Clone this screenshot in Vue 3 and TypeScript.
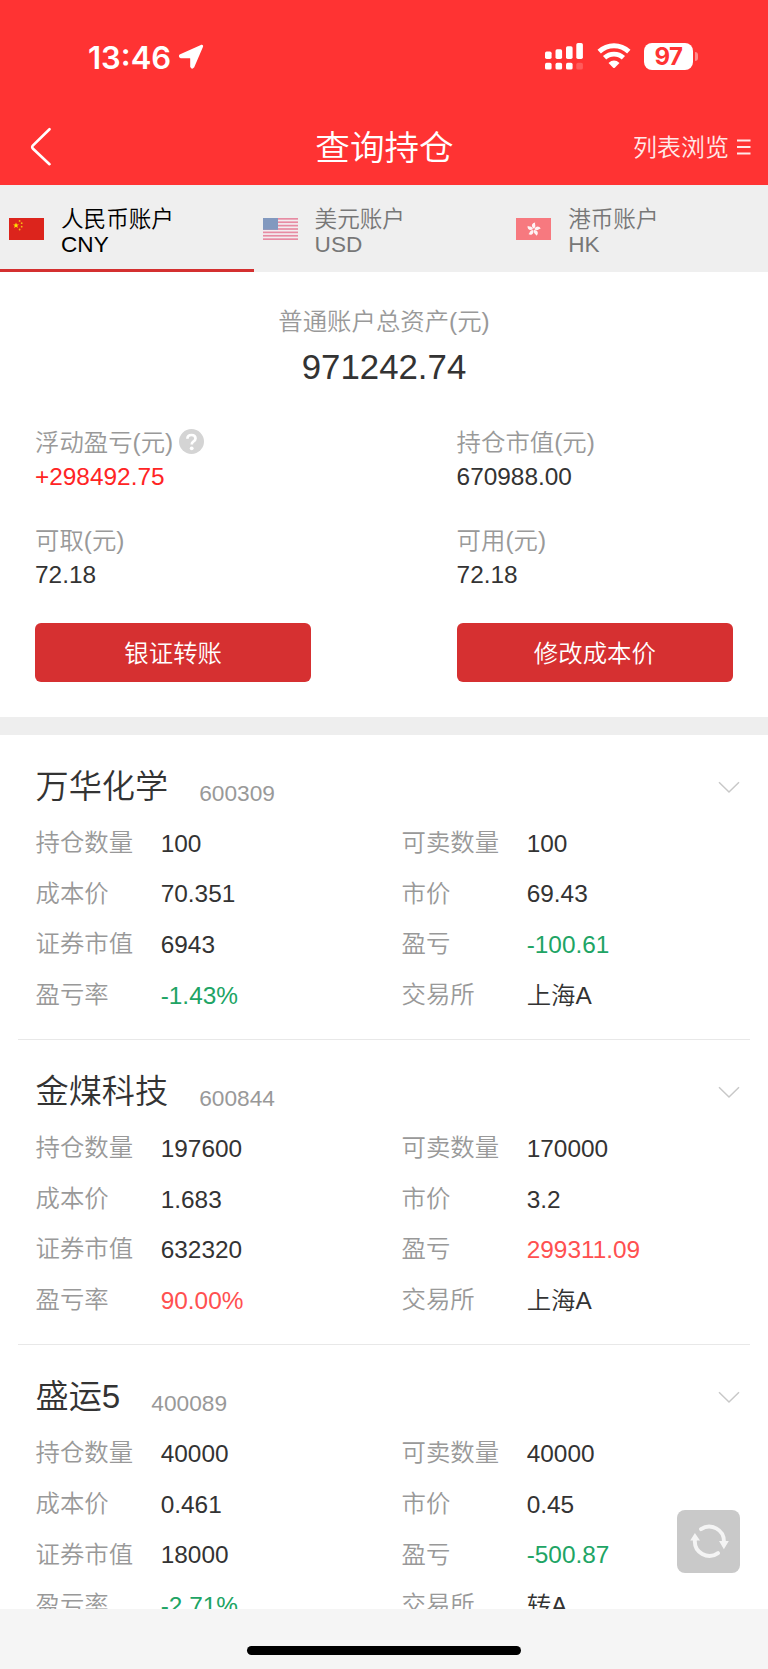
<script setup lang="ts">
type Tone = 'plain' | 'up' | 'down'
interface Cell { label: string; value: string; tone?: Tone }
interface Holding { name: string; code: string; cells: Cell[] }

const tabs = [
  { flag: 'cn', name: '人民币账户', code: 'CNY', active: true },
  { flag: 'us', name: '美元账户', code: 'USD', active: false },
  { flag: 'hk', name: '港币账户', code: 'HK', active: false },
]

const summary: { label: string; value: string; up?: boolean; help?: boolean }[] = [
  { label: '浮动盈亏(元)', value: '+298492.75', up: true, help: true },
  { label: '持仓市值(元)', value: '670988.00' },
  { label: '可取(元)', value: '72.18' },
  { label: '可用(元)', value: '72.18' },
]

function cells(v: string[], tone: Tone): Cell[] {
  return [
    { label: '持仓数量', value: v[0] },
    { label: '可卖数量', value: v[1] },
    { label: '成本价', value: v[2] },
    { label: '市价', value: v[3] },
    { label: '证券市值', value: v[4] },
    { label: '盈亏', value: v[5], tone },
    { label: '盈亏率', value: v[6], tone },
    { label: '交易所', value: v[7] },
  ]
}

const holdings: Holding[] = [
  { name: '万华化学', code: '600309', cells: cells(['100', '100', '70.351', '69.43', '6943', '-100.61', '-1.43%', '上海A'], 'down') },
  { name: '金煤科技', code: '600844', cells: cells(['197600', '170000', '1.683', '3.2', '632320', '299311.09', '90.00%', '上海A'], 'up') },
  { name: '盛运5', code: '400089', cells: cells(['40000', '40000', '0.461', '0.45', '18000', '-500.87', '-2.71%', '转A'], 'down') },
]
</script>

<template>
  <div class="screen">
    <header class="top">
      <div class="status">
        <span class="time">13:46</span>
        <svg class="arrow" width="26" height="26" viewBox="0 0 26 26"><path d="M23.300 1.800Q24.500 1.400 24 2.700L15.200 23Q14 24.500 13.200 22.700V14.500Q13.100 13.400 12 13.300H3Q1 12.600 2.600 11.100Z" fill="#fff" stroke="#fff" stroke-width="2" stroke-linejoin="round" /></svg>
        <div class="signals">
          <svg width="39" height="27" viewBox="0 0 39 27" fill="#fff">
            <rect x="0" y="8.500" width="6.600" height="7.500" rx="1.700" /><rect x="10.500" y="6.300" width="6.600" height="9.700" rx="1.700" />
            <rect x="21" y="3.300" width="6.600" height="12.700" rx="1.700" /><rect x="31.300" y="0" width="6.600" height="16" rx="1.700" />
            <rect x="0" y="19.700" width="6.600" height="6.900" rx="1.700" /><rect x="10.500" y="19.700" width="6.600" height="6.900" rx="1.700" />
            <rect x="21" y="19.700" width="6.600" height="6.900" rx="1.700" /><rect x="31.300" y="19.700" width="6.600" height="6.900" rx="1.700" opacity=".2" />
          </svg>
          <svg class="wifi" width="34" height="26" viewBox="0 0 34 26" fill="none" stroke="#fff">
            <path d="M2.200 8.600A21.500 21.500 0 0 1 31.800 8.600" stroke-width="4.900" /><path d="M7.600 14.800A13.600 13.600 0 0 1 26.400 14.800" stroke-width="4.700" />
            <path d="M11.500 19.900Q17 15.200 22.500 19.900L17.800 24.700Q17 25.400 16.200 24.700Z" fill="#fff" stroke="none" />
          </svg>
          <div class="battery">97</div>
          <span class="nub"></span>
        </div>
      </div>
      <div class="nav">
        <svg class="back" width="22" height="40" viewBox="0 0 22 40"><path d="M19.500 2.200L2.800 18.500Q1.600 20 2.800 21.500L19.500 37.200" fill="none" stroke="#fff" stroke-width="2.600" stroke-linecap="round" /></svg>
        <h1>查询持仓</h1>
        <div class="browse">
          <span>列表浏览</span>
          <svg width="15" height="16" viewBox="0 0 15 16"><path d="M1 1.500H14.500M1 8H14.500M1 14.500H14.500" stroke="#ffe9e9" stroke-width="2" /></svg>
        </div>
      </div>
    </header>

    <nav class="tabs">
      <div v-for="t in tabs" :key="t.code" class="tab" :class="{ active: t.active }">
        <svg v-if="t.flag === 'cn'" class="flag" viewBox="0 0 35 22">
          <rect width="35" height="22" fill="#dc241c" />
          <path d="M7 4.400L7.800 6.500H10L8.200 7.800L8.900 10L7 8.700L5.100 10L5.800 7.800L4 6.500H6.200Z" fill="#ffe600" />
          <g fill="#f5b915"><circle cx="10.600" cy="2.900" r=".9" /><circle cx="12.700" cy="5.200" r=".9" /><circle cx="12.700" cy="8.700" r=".9" /><circle cx="10.600" cy="11.500" r=".9" /></g>
        </svg>
        <svg v-else-if="t.flag === 'us'" class="flag" viewBox="0 0 35 22">
          <rect width="35" height="22" fill="#f3edf0" />
          <rect v-for="n in 7" :key="n" :y="(n - 1) * 3.384" width="35" height="1.692" fill="#e78ca3" />
          <rect width="15" height="11.800" fill="#8299bf" />
        </svg>
        <svg v-else class="flag" viewBox="0 0 35 22">
          <rect width="35" height="22" fill="#f7797f" />
          <g transform="translate(17.700 11.400)" fill="#fff" opacity=".92">
            <path v-for="n in 5" :key="n" :transform="`rotate(${(n - 1) * 72 + 8})`" d="M0 -.7C-3.500 -2.500 -2.700 -6.300 .6 -7C-.2 -5.300 2.800 -3.500 0 -.7Z" />
          </g>
        </svg>
        <div class="tab-text"><span>{{ t.name }}</span><span>{{ t.code }}</span></div>
      </div>
    </nav>

    <section class="assets">
      <div class="total-label">普通账户总资产(元)</div>
      <div class="total">971242.74</div>
      <div class="summary">
        <div v-for="s in summary" :key="s.label" class="item">
          <div class="item-label">
            <span>{{ s.label }}</span>
            <svg v-if="s.help" class="help" viewBox="0 0 25 25">
              <circle cx="12.500" cy="12.500" r="12.500" fill="#d4d4d4" />
              <path d="M8.400 9.700Q8.500 6 12.500 6Q16.500 6 16.500 9.500Q16.500 11.300 14.300 12.600Q12.700 13.600 12.700 15.600" fill="none" stroke="#fff" stroke-width="2.700" />
              <circle cx="12.700" cy="19.300" r="1.900" fill="#fff" />
            </svg>
          </div>
          <div class="item-value" :class="{ gain: s.up }">{{ s.value }}</div>
        </div>
      </div>
      <div class="actions">
        <button>银证转账</button>
        <button>修改成本价</button>
      </div>
    </section>

    <main class="list">
      <article v-for="h in holdings" :key="h.code" class="card">
        <div class="head">
          <span class="name">{{ h.name }}</span>
          <span class="code">{{ h.code }}</span>
          <svg class="chev" width="22" height="13" viewBox="0 0 22 13"><path d="M1 1.300L11 11L21 1.300" fill="none" stroke="#c8c8c8" stroke-width="1.500" /></svg>
        </div>
        <div class="grid">
          <div v-for="c in h.cells" :key="c.label" class="cell">
            <span class="key">{{ c.label }}</span>
            <span class="val" :class="c.tone">{{ c.value }}</span>
          </div>
        </div>
      </article>
    </main>

    <footer class="bottom"><span class="home"></span></footer>

    <div class="refresh">
      <svg width="40" height="36" viewBox="0 0 40 36">
        <g fill="none" stroke="#f4f4f4" stroke-width="3.900" stroke-linecap="round">
          <path d="M12 6.200A14.600 14.600 0 0 1 34.900 18.500" /><path d="M29 30.100A14.600 14.600 0 0 1 5.900 17" />
        </g>
        <path d="M30 18H39.800L34.900 26.200Z M1.200 17.500H11L5.900 10Z" fill="#f4f4f4" />
      </svg>
    </div>
  </div>
</template>

<style>
body { margin: 0; background: #fff; }
</style>

<style scoped>
.screen {
  width: 768px;
  height: 1669px;
  position: relative;
  display: flex;
  flex-direction: column;
  overflow: hidden;
  background: #fff;
  color: #333;
  font-family: "Liberation Sans", "Noto Sans CJK SC", sans-serif;
  font-size: 24.4px;
  font-weight: 350;
}
.top { height: 185px; background: #f33; color: #fff; flex: none; }
.status { height: 112px; box-sizing: border-box; padding: 0 70px 0 88px; display: flex; align-items: center; }
.time { font: 600 31px/40px Inter, sans-serif; margin-top: 3px; width: 90px; }
.arrow { margin-top: 2px; }
.signals { margin-left: auto; display: flex; align-items: center; }
.wifi { margin-left: 13px; }
.battery {
  width: 49px; height: 27px; margin-left: 13px; border-radius: 8px; background: #fff; color: #f33;
  font: 700 24px/27px Inter, sans-serif; text-align: center; letter-spacing: -.5px;
}
.nub { width: 3px; height: 9px; margin-left: 2px; border-radius: 0 4px 4px 0; background: #ff8a8a; }
.nav { height: 70px; display: grid; grid-template-columns: 1fr auto 1fr; align-items: center; padding: 0 17px 0 30px; }
h1 { margin: 2px 0 0 -12px; font-size: 34.600px; line-height: 50px; font-weight: inherit; }
.browse { display: flex; align-items: center; justify-content: flex-end; gap: 7px; font-size: 24px; color: #ffe9e9; }
.browse span { margin-top: -3px; }
.tabs { height: 87px; flex: none; display: flex; background: #efefef; }
.tab { width: 253.600px; box-sizing: border-box; padding: 4px 0 0 9px; display: flex; align-items: center; color: #777; border-bottom: 3px solid transparent; }
.tab.active { color: #000; border-color: #d43030; }
.flag { width: 35px; height: 22px; margin-right: 17px; flex: none; }
.tab-text { display: flex; flex-direction: column; font-size: 22.600px; line-height: 24.500px; padding-top: 7px; }
.assets { height: 463px; flex: none; box-sizing: border-box; border-bottom: 18px solid #eee; padding: 30.500px 35px 0; }
.total-label { text-align: center; line-height: 38px; color: #999; }
.total { text-align: center; font-size: 34.800px; line-height: 52px; }
.summary { display: grid; grid-template-columns: 421.600px 1fr; grid-auto-rows: 98px; padding-top: 31px; }
.item-label { display: flex; align-items: center; height: 36px; color: #999; }
.item-label span { margin-top: -3px; }
.item-value { line-height: 34px; }
.item-value.gain { color: #ff2424; }
.help { width: 25px; height: 25px; margin-left: 6px; }
.actions { display: flex; justify-content: space-between; margin-top: 3px; }
button { width: 276.300px; height: 59.500px; padding: 0 0 2px; border: 0; border-radius: 6px; background: #d63031; color: #fff; font: inherit; }
.list { flex: 1; min-height: 0; overflow: hidden; }
.card { height: 305.100px; box-sizing: border-box; margin: 0 18px; padding: 27px 10px 0 17.500px; border-bottom: 1.500px solid #e8e8e8; }
.head { display: flex; align-items: baseline; height: 56.500px; line-height: 50px; }
.name { font-size: 33.200px; }
.code { font-size: 22.700px; color: #999; margin-left: 31px; position: relative; top: 3px; }
.chev { margin-left: auto; align-self: flex-start; margin-top: 19px; }
.grid { display: grid; grid-template-columns: 366px 1fr; grid-auto-rows: 50.650px; }
.cell { display: flex; align-items: center; line-height: 36px; }
.key { width: 125.200px; color: #999; margin-top: -1.500px; }
.val.up { color: #ff5050; }
.val.down { color: #20a464; }
.bottom { height: 60px; flex: none; background: #f5f5f5; display: flex; justify-content: center; }
.home { width: 274px; height: 9px; margin-top: 37px; border-radius: 5px; background: #000; }
.refresh { position: absolute; left: 677px; top: 1509.500px; width: 63px; height: 63px; border-radius: 8px; background: #c9c9c9; display: flex; align-items: center; justify-content: center; }
</style>
